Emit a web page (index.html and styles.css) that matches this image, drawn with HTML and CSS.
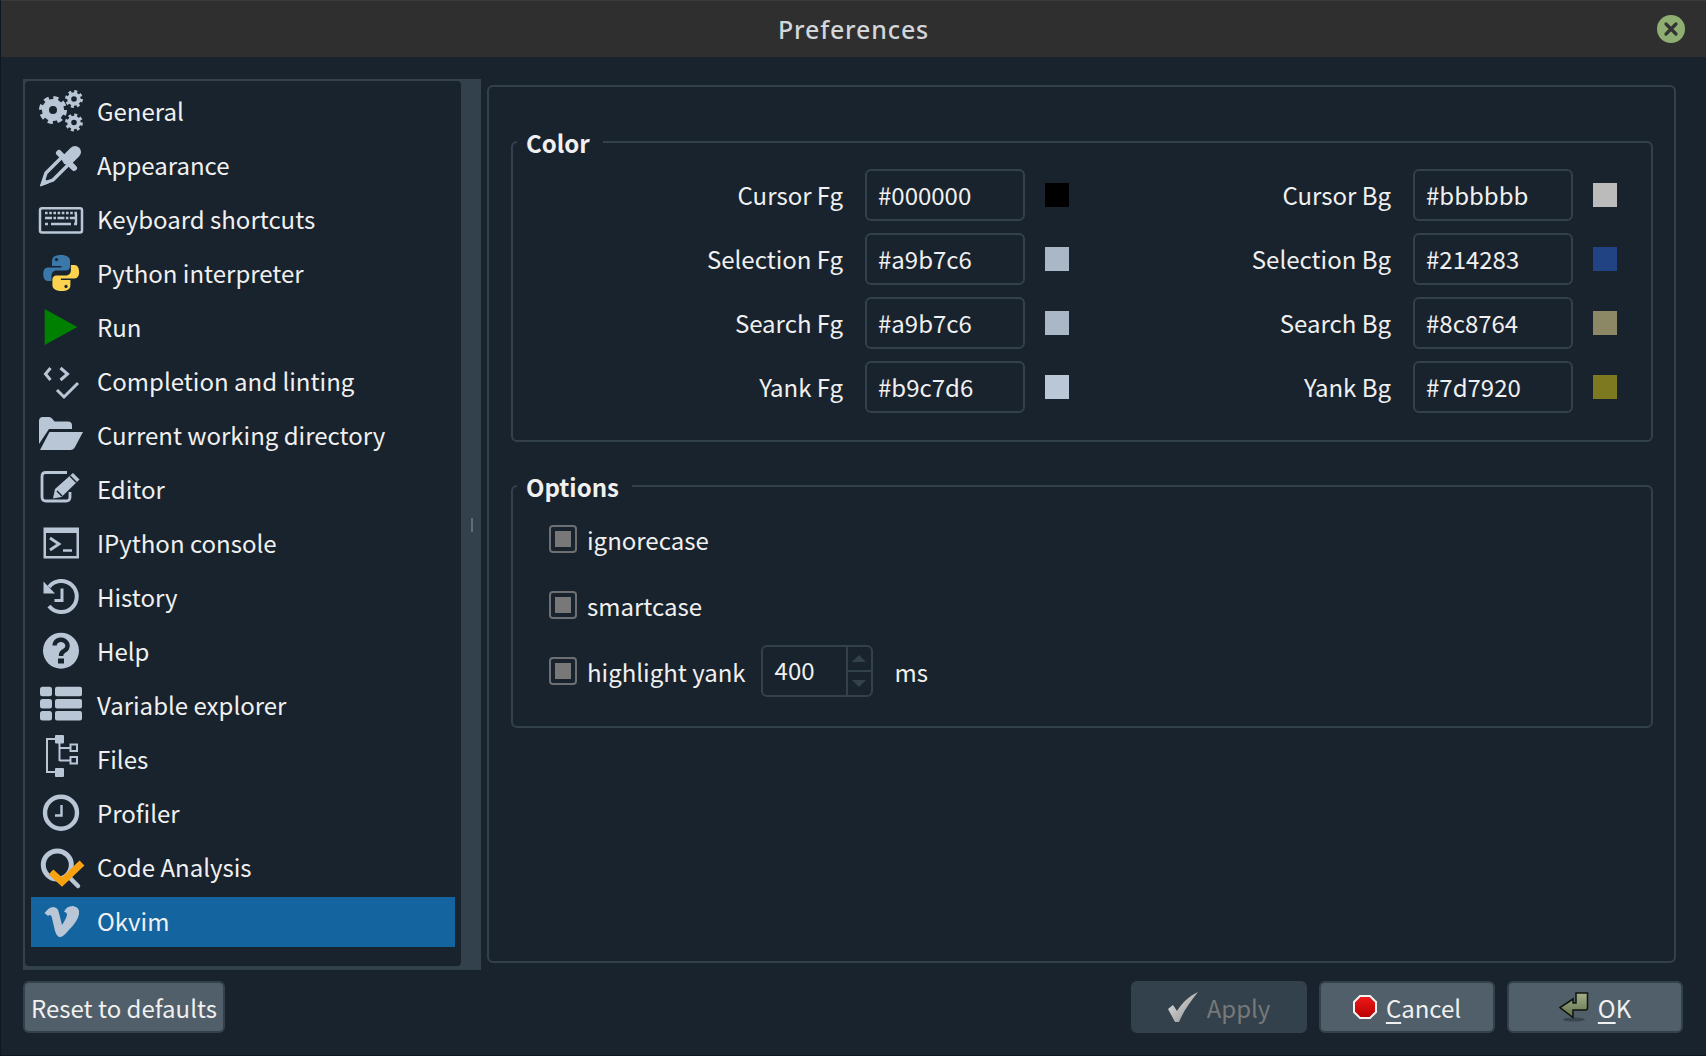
FILE: index.html
```html
<!DOCTYPE html>
<html>
	<head>
		<meta charset="utf-8">
		<title>Preferences</title>
		<link rel="stylesheet" href="styles.css">
	</head>
	<body>
		<div class="titlebar">
			<span></span>
			<span class="title">Preferences</span>
			<svg class="close" viewBox="0 0 28 28"><circle cx="14" cy="14" r="14" fill="#8fae72"/><path d="M9 9l10 10M19 9L9 19" stroke="#333" stroke-width="3.2" stroke-linecap="round"/></svg>
		</div>

		<div class="main">
			<!--Page list-->
			<div class="sidebar">
				<ul class="pages">
					<li><svg class="icon" viewBox="0 0 46 46"><g fill="none" stroke="#b8c6d6"><circle cx="15" cy="21" r="7.500" stroke-width="7"/><circle cx="15" cy="21" r="11.500" stroke-width="5" stroke-dasharray="4.800 4.230"/><circle cx="36" cy="10" r="4.800" stroke-width="4"/><circle cx="36" cy="10" r="7" stroke-width="3.800" stroke-dasharray="2.800 2.700"/><circle cx="36" cy="33.500" r="4.800" stroke-width="4"/><circle cx="36" cy="33.500" r="7" stroke-width="3.800" stroke-dasharray="2.800 2.700"/></g></svg>General</li>
					<li><svg class="icon" viewBox="0 0 46 46"><g fill="#b8c6d6" stroke="#b8c6d6"><path d="M37 9L30 16" stroke-width="12" stroke-linecap="round"/><path d="M21 10l15 15" stroke-width="6" stroke-linecap="round"/><path d="M23 15L8 30 4.500 40.500 15 37l15-15" fill="none" stroke-width="3.400"/><path d="M2.500 43l3-8 5 5z"/></g></svg>Appearance</li>
					<li><svg class="icon" viewBox="0 0 46 46"><rect x="2" y="11.200" width="42" height="24.400" rx="2" fill="none" stroke="#b8c6d6" stroke-width="2.500"/><g stroke="#b8c6d6" stroke-width="2.400" fill="none"><path d="M7 16h32" stroke-dasharray="2.600 1.600"/><path d="M7 21h30" stroke-dasharray="7 1.400 2.600 1.400"/><path d="M7 27h3M13 27h20M36 27h3M38 17v10"/></g></svg>Keyboard shortcuts</li>
					<li><svg class="icon" viewBox="0 0 46 46"><path d="M23 4c-6 0-9 2-9 6v5h9.500v1.500H10c-3.500 0-4.700 3-4.700 6.500s1.200 7 4.700 7h3.500v-5c0-4 2.500-5.500 5.500-5.500h9c2.500 0 4-2 4-4V10c0-3.500-3-6-9-6z" fill="#3a78aa"/><path d="M23 4c-6 0-9 2-9 6v5h9.500v1.500H10c-3.500 0-4.700 3-4.700 6.500s1.200 7 4.700 7h3.500v-5c0-4 2.500-5.500 5.500-5.500h9c2.500 0 4-2 4-4V10c0-3.500-3-6-9-6z" fill="#fdd24f" transform="rotate(180 23.200 22)"/><circle cx="18.500" cy="8.600" r="1.600" fill="#19232d"/><circle cx="28" cy="35.400" r="1.600" fill="#19232d"/></svg>Python interpreter</li>
					<li><svg class="icon" viewBox="0 0 46 46"><path d="M6.700 4L39.300 22 6.700 40z" fill="#008000"/></svg>Run</li>
					<li><svg class="icon" viewBox="0 0 46 46"><path d="M12.500 9L7.500 15l5 6M22.500 9l7 6-7 6M19 31l7 7 14-14" fill="none" stroke="#b8c6d6" stroke-width="3"/></svg>Completion and linting</li>
					<li><svg class="icon" viewBox="0 0 46 46"><path d="M1 8q0-4 4-4h6q2 0 3.500 2l2 2.500H30q4 0 4 4V16H11L1 31z" fill="#b8c6d6"/><path d="M2 37l9.500-18H45l-8 15q-1.500 3-4.500 3z" fill="#b8c6d6"/></svg>Current working directory</li>
					<li><svg class="icon" viewBox="0 0 46 46"><path d="M29 5.500H8q-4 0-4 4V30q0 4 4 4h20q4 0 4-4v-5" fill="none" stroke="#b8c6d6" stroke-width="2.800"/><path d="M17 22L35 6l6.500 6.500-18 17.500-8.500 1.500z" fill="#b8c6d6"/><path d="M32 9l6.500 6.500" stroke="#19232d" stroke-width="1.500"/><path d="M19 24l5 5" stroke="#19232d" stroke-width="1.500"/></svg>Editor</li>
					<li><svg class="icon" viewBox="0 0 46 46"><path d="M5.500 6.500h35.500v31H5.500z" fill="#b8c6d6"/><rect x="8" y="12" width="30.500" height="23" fill="#19232d"/><path d="M12 17l9 6-9 6" fill="none" stroke="#b8c6d6" stroke-width="2.800"/><path d="M25 29.500h9" stroke="#b8c6d6" stroke-width="2.500"/></svg>IPython console</li>
					<li><svg class="icon" viewBox="0 0 46 46"><path d="M11 12A15.500 15.500 0 1 1 11 31" fill="none" stroke="#b8c6d6" stroke-width="4"/><path d="M5.500 6.500V18.500H17z" fill="#b8c6d6"/><path d="M24 13.500V25.500H16.500" fill="none" stroke="#b8c6d6" stroke-width="3"/></svg>History</li>
					<li><svg class="icon" viewBox="0 0 46 46"><circle cx="23" cy="21.700" r="18" fill="#b8c6d6"/><path d="M16.500 16.500a6.500 6 0 1 1 9.500 5.500q-3 1.500-3 5" fill="none" stroke="#19232d" stroke-width="4.500"/><rect x="20" y="29.500" width="6" height="5" fill="#19232d"/></svg>Help</li>
					<li><svg class="icon" viewBox="0 0 46 46"><g fill="#b8c6d6"><rect x="2" y="3.700" width="12" height="9.600" rx="2.500"/><rect x="17" y="3.700" width="27" height="9.600" rx="2"/><rect x="2" y="16" width="12" height="9.600" rx="2.500"/><rect x="17" y="16" width="27" height="9.600" rx="2"/><rect x="2" y="28" width="12" height="9.600" rx="2.500"/><rect x="17" y="28" width="27" height="9.600" rx="2"/></g></svg>Variable explorer</li>
					<li><svg class="icon" viewBox="0 0 46 46"><g fill="#b8c6d6"><rect x="17" y="-2" width="9" height="8.500" rx="1"/><rect x="17" y="31" width="9" height="9" rx="1"/></g><g fill="none" stroke="#b8c6d6" stroke-width="2"><path d="M18 2H9V35h9M21.500 6V24M21.500 11H32M21.500 23.500H32"/><rect x="32.500" y="7.500" width="6.500" height="6.500"/><rect x="32.500" y="20" width="6.500" height="6.500"/></g></svg>Files</li>
					<li><svg class="icon" viewBox="0 0 46 46"><circle cx="23" cy="21.700" r="16" fill="none" stroke="#b8c6d6" stroke-width="4.400"/><path d="M23.500 14V24.500H17" fill="none" stroke="#b8c6d6" stroke-width="2.400"/></svg>Profiler</li>
					<li><svg class="icon" viewBox="0 0 46 46"><circle cx="19.300" cy="20" r="14" fill="none" stroke="#b8c6d6" stroke-width="5"/><path d="M29 30l11 11" stroke="#b8c6d6" stroke-width="4.500" stroke-linecap="round"/><path d="M13 27l11 10L44 18" fill="none" stroke="#f9a20f" stroke-width="7"/></svg>Code Analysis</li>
					<li class="current"><svg class="icon" viewBox="0 0 46 46"><path d="M6.500 14Q11 8 15 8q5 0 6 6l3 12q4-6 5-10 0-3-3-3 2-6 9-6 7 1 6 8-1 7-11 17-5 6-8 6-3 0-5-6l-3-13q-1-5-4-2z" fill="#b8c6d6"/></svg>Okvim</li>
				</ul>
				<div class="handle"></div>
			</div>

			<!--Okvim page-->
			<div class="pane">
				<fieldset class="group">
					<legend>Color</legend>
					<div class="colors">
						<label>Cursor Fg</label><div class="field">#000000</div><div class="swatch" style="background:#000000"></div>
						<label>Cursor Bg</label><div class="field">#bbbbbb</div><div class="swatch" style="background:#bbbbbb"></div>
						<label>Selection Fg</label><div class="field">#a9b7c6</div><div class="swatch" style="background:#a9b7c6"></div>
						<label>Selection Bg</label><div class="field">#214283</div><div class="swatch" style="background:#214283"></div>
						<label>Search Fg</label><div class="field">#a9b7c6</div><div class="swatch" style="background:#a9b7c6"></div>
						<label>Search Bg</label><div class="field">#8c8764</div><div class="swatch" style="background:#8c8764"></div>
						<label>Yank Fg</label><div class="field">#b9c7d6</div><div class="swatch" style="background:#b9c7d6"></div>
						<label>Yank Bg</label><div class="field">#7d7920</div><div class="swatch" style="background:#7d7920"></div>
					</div>
				</fieldset>

				<fieldset class="group options-group">
					<legend>Options</legend>
					<div class="options">
						<div class="option"><span class="check"></span>ignorecase</div>
						<div class="option"><span class="check"></span>smartcase</div>
						<div class="option">
							<span class="check"></span>highlight yank
							<div class="spin">
								<span class="spin-value">400</span>
								<span class="spin-arrows"><span class="arrow-up"></span><span class="arrow-down"></span></span>
							</div>
							<span class="unit">ms</span>
						</div>
					</div>
				</fieldset>
			</div>
		</div>

		<div class="footer">
			<button class="reset">Reset to defaults</button>
			<div class="actions">
				<button disabled>
					<svg class="btn-icon" viewBox="0 0 30 30"><defs><linearGradient id="chk" x1="0" y1="0" x2="1" y2="1"><stop offset="0" stop-color="#e8e8e8"/><stop offset="1" stop-color="#8a8a8a"/></linearGradient></defs><path d="M0 17l5-4 4 6C14 11 21 4 30 0 23 9 16 18 11 30H7z" fill="url(#chk)"/></svg>
					Apply
				</button>
				<button>
					<svg class="btn-icon stop" viewBox="0 0 24 24"><defs><linearGradient id="red" x1="0" y1="0" x2="0" y2="1"><stop offset="0" stop-color="#f01a1a"/><stop offset="1" stop-color="#b80000"/></linearGradient></defs><path d="M7 1h10l6 6v10l-6 6H7l-6-6V7z" fill="url(#red)" stroke="#f4f4f4" stroke-width="2"/></svg>
					<span><u>C</u>ancel</span>
				</button>
				<button>
					<svg class="btn-icon" viewBox="0 0 30 30"><defs><linearGradient id="olive" x1="0" y1="0" x2="0" y2="1"><stop offset="0" stop-color="#a3b08c"/><stop offset="1" stop-color="#5f7048"/></linearGradient></defs><ellipse cx="15" cy="27.500" rx="11" ry="2" fill="#3a464f"/><path d="M17 1h11.500v15q0 2-2 2H14v7.500L1 15.500 14 7v4h3z" fill="url(#olive)" stroke="#10140c" stroke-width="1.500"/></svg>
					<span><u>O</u>K</span>
				</button>
			</div>
		</div>
	</body>
</html>
```

FILE: styles.css
```css
body {
	margin: 0;
	height: 1056px;
	box-sizing: border-box;
	overflow: hidden;
	background-color: #19232d;
	color: #f0f0f0;
	font-family: "Noto Sans CJK SC", "Noto Sans", sans-serif;
	font-size: 24px;
	border-left: 1px solid #0f181e;
	border-bottom: 1px solid #0f181e;
}

/*Title bar*/
.titlebar {
	height: 57px;
	box-sizing: border-box;
	padding: 0 21px;
	display: grid;
	grid-template-columns: 1fr auto 1fr;
	align-items: center;
	background-color: #2f2f2f;
	border-top: 1px solid #3a3a3a;
}

.title {
	font-family: "Noto Sans", sans-serif;
	font-size: 25px;
	font-weight: 500;
	color: #d3d6da;
	letter-spacing: 0.85px;
}

.close {
	width: 28px;
	height: 28px;
	justify-self: end;
}

/*Main area*/
.main {
	display: flex;
	gap: 6px;
	padding: 22px 30px 0 22px;
}

.sidebar {
	width: 458px;
	height: 891px;
	display: flex;
	flex-shrink: 0;
	background-color: #32414b;
}

.pages {
	width: 440px;
	height: 889px;
	box-sizing: border-box;
	margin: 0;
	padding: 6px 6px 0 6px;
	list-style: none;
	background-color: #19232d;
	border: 2px solid #32414b;
	border-radius: 6px;
}

.pages li {
	height: 50px;
	box-sizing: border-box;
	margin-bottom: 4px;
	padding: 0 0 3px 7px;
	display: flex;
	align-items: center;
	gap: 13px;
}

.pages li.current {
	background-color: #1464a0;
}

.icon {
	width: 46px;
	height: 46px;
	margin-top: 3px;
	flex-shrink: 0;
	overflow: visible;
}

.handle {
	width: 2px;
	height: 14px;
	margin: auto 8px;
	background-color: #5f6d78;
}

.pane {
	flex: 1;
	height: 878px;
	margin-top: 6px;
	box-sizing: border-box;
	padding: 40px 21px 0 22px;
	border: 2px solid #32414b;
	border-radius: 6px;
}

/*Groups*/
.group {
	margin: 0;
	padding: 0;
	min-width: 0;
	border: 2px solid #32414b;
	border-radius: 6px;
}

.group legend {
	margin-left: 4px;
	padding: 0 13px 0 9px;
	height: 30px;
	line-height: 32px;
	font-weight: 700;
}

.options-group {
	margin-top: 29px;
}

.colors {
	padding: 12px 0 27px 32px;
	display: grid;
	grid-template-columns: repeat(2, 320px 160px 68px);
	row-gap: 12px;
	align-items: center;
}

.colors label {
	padding-right: 22px;
	padding-bottom: 1px;
	text-align: right;
}

.field {
	height: 52px;
	box-sizing: border-box;
	padding-left: 11px;
	line-height: 47px;
	border: 2px solid #32414b;
	border-radius: 6px;
}

.swatch {
	width: 24px;
	height: 24px;
	margin-left: 20px;
}

.options {
	padding: 12px 0 29px 36px;
	display: flex;
	flex-direction: column;
	gap: 14px;
}

.option {
	height: 52px;
	display: flex;
	align-items: center;
}

.check {
	width: 28px;
	height: 28px;
	box-sizing: border-box;
	margin-right: 10px;
	padding: 4px;
	border: 2px solid #6d6f72;
	border-radius: 4px;
}

.check::before {
	content: "";
	display: block;
	width: 16px;
	height: 16px;
	background-color: #787878;
}

.spin {
	width: 112px;
	height: 52px;
	box-sizing: border-box;
	margin-left: 15px;
	display: flex;
	border: 2px solid #32414b;
	border-radius: 6px;
}

.spin-value {
	width: 83px;
	padding-left: 12px;
	line-height: 46px;
	box-sizing: border-box;
}

.spin-arrows {
	flex: 1;
	display: flex;
	flex-direction: column;
	border-left: 2px solid #32414b;
}

.arrow-up, .arrow-down {
	flex: 1;
	display: flex;
	align-items: center;
	justify-content: center;
}

.arrow-up {
	border-bottom: 2px solid #32414b;
}

.arrow-up::before, .arrow-down::before {
	content: "";
	border-left: 7px solid transparent;
	border-right: 7px solid transparent;
}

.arrow-up::before {
	border-bottom: 7px solid #32414b;
}

.arrow-down::before {
	border-top: 7px solid #32414b;
}

.unit {
	margin-left: 22px;
}

/*Bottom buttons*/
.footer {
	margin-top: 11px;
	padding: 0 23px 0 22px;
	display: flex;
	justify-content: space-between;
}

.actions {
	display: flex;
	gap: 12px;
}

button {
	height: 52px;
	width: 176px;
	display: flex;
	align-items: center;
	justify-content: center;
	gap: 9px;
	padding: 0;
	font-family: inherit;
	font-size: 24px;
	color: #f0f0f0;
	background-color: #505f69;
	border: 2px solid #32414b;
	border-radius: 6px;
}

button.reset {
	width: 202px;
}

button:disabled {
	color: #787878;
	background-color: #32414b;
}

button u {
	text-decoration-thickness: 2px;
	text-underline-offset: 4px;
}

.btn-icon {
	width: 30px;
	height: 30px;
}

.stop {
	width: 24px;
	height: 24px;
}
```
